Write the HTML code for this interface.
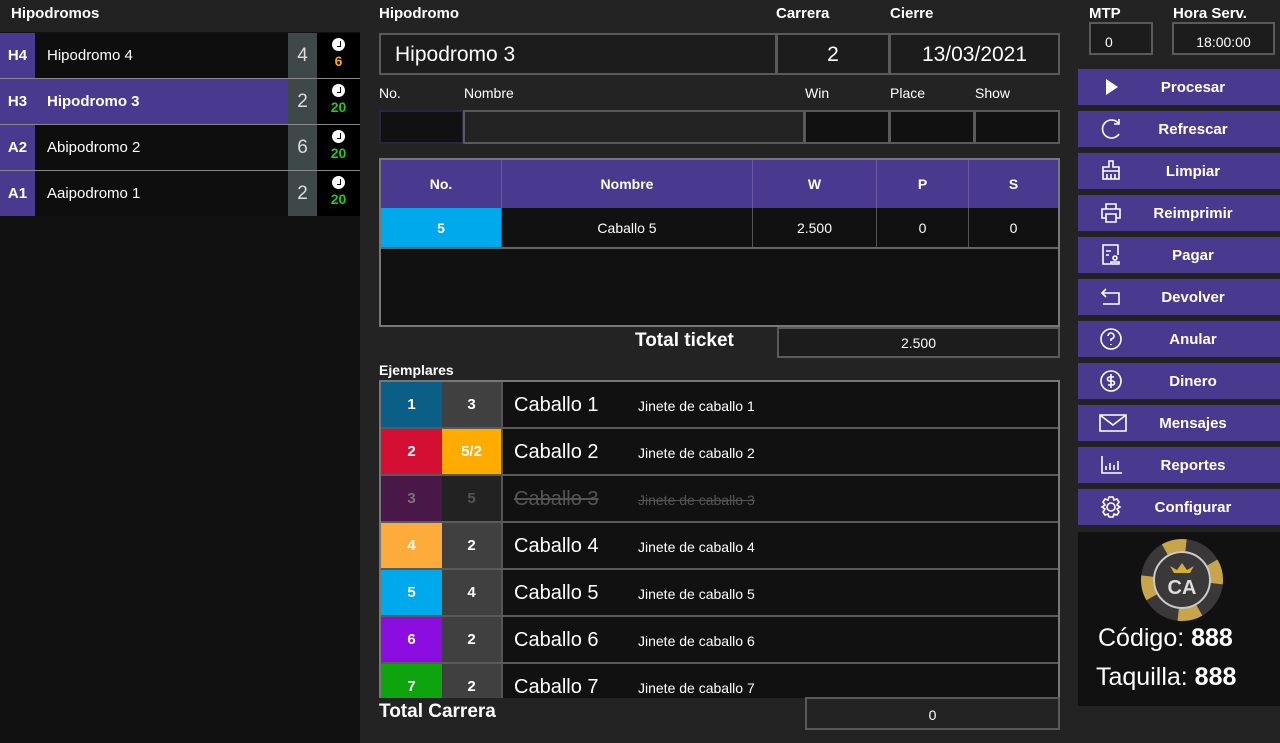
<!DOCTYPE html>
<html><head><meta charset="utf-8"><style>
*{box-sizing:border-box;margin:0;padding:0}
body{width:1280px;height:743px;background:#232323;font-family:"Liberation Sans",sans-serif;color:#fff;position:relative;overflow:hidden}
.a{position:absolute}
.lbl{font-weight:bold;font-size:15px}
.box{position:absolute;border:2px solid #5a5a5a;background:#1c1c1c}
.row{position:absolute;left:0;width:360px;height:45px}
.bd{position:absolute;left:0;top:0;width:35px;height:45px;background:#4a3a8f;font-weight:bold;font-size:15px;display:flex;align-items:center;justify-content:center}
.nm{position:absolute;left:35px;top:0;width:253px;height:45px;background:#0e0e0e;font-size:15px;display:flex;align-items:center;padding-left:12px}
.nb{position:absolute;left:288px;top:0;width:29px;height:45px;background:#3e4848;font-size:19px;display:flex;align-items:center;justify-content:center;color:#ddd}
.ck{position:absolute;left:317px;top:0;width:43px;height:45px;background:#000;text-align:center}
.ck i{display:block;width:13px;height:13px;border-radius:50%;background:#fff;margin:5px auto 0;position:relative}
.ck i:after{content:"";position:absolute;left:5px;top:3px;width:3px;height:5px;border-right:1.5px solid #000;border-bottom:1.5px solid #000}
.ck b{display:block;font-size:14px;margin-top:2px}
.btn{position:absolute;left:1078px;width:202px;height:36px;background:#4a3a8f;font-weight:bold;font-size:15px}
.btn span{position:absolute;left:0;right:0;top:10px;text-align:center;padding-left:28px}
.btn svg{position:absolute;left:20px;top:5px}
.th{position:absolute;top:0;height:48px;display:flex;align-items:center;justify-content:center;font-weight:bold;font-size:14px;border-right:1px solid #6a5aa8}
.td{position:absolute;top:48px;height:39px;display:flex;align-items:center;justify-content:center;font-size:14px;border-right:1px solid #555}
.er{position:absolute;left:0;width:678px;height:47px;border-bottom:2px solid #5a5a5a;background:#111}
.c1,.c2{position:absolute;top:0;height:45px;width:61px;display:flex;align-items:center;justify-content:center;font-weight:bold;font-size:15px}
.c1{left:0}.c2{left:61px;background:#404040;border-right:2px solid #555}
.en{position:absolute;left:133px;top:12px;font-size:20px}
.ej{position:absolute;left:257px;top:16px;font-size:14px}
</style></head><body>
<div class="a" style="left:0;top:0;width:360px;height:743px;background:#111"></div>
<div class="a" style="left:0;top:0;width:360px;height:32px;background:#222"></div>
<div class="a lbl" style="left:11px;top:5px">Hipodromos</div>

<div class="row" style="top:33px"><div class="bd">H4</div><div class="nm">Hipodromo 4</div><div class="nb">4</div><div class="ck"><i></i><b style="color:#f5a623">6</b></div></div>
<div class="row" style="top:79px"><div class="bd">H3</div><div class="nm" style="background:#4a3a8f;font-weight:bold">Hipodromo 3</div><div class="nb">2</div><div class="ck"><i></i><b style="color:#1ecb1e">20</b></div></div>
<div class="row" style="top:125px"><div class="bd">A2</div><div class="nm">Abipodromo 2</div><div class="nb">6</div><div class="ck"><i></i><b style="color:#1ecb1e">20</b></div></div>
<div class="row" style="top:171px"><div class="bd">A1</div><div class="nm">Aaipodromo 1</div><div class="nb">2</div><div class="ck"><i></i><b style="color:#1ecb1e">20</b></div></div>
<div class="a" style="left:0;top:78px;width:360px;height:1px;background:#888"></div>
<div class="a" style="left:0;top:124px;width:360px;height:1px;background:#888"></div>
<div class="a" style="left:0;top:170px;width:360px;height:1px;background:#888"></div>

<div class="a lbl" style="left:379px;top:5px">Hipodromo</div>
<div class="a lbl" style="left:776px;top:5px">Carrera</div>
<div class="a lbl" style="left:890px;top:5px">Cierre</div>
<div class="box" style="left:379px;top:33px;width:398px;height:42px;font-size:21px;padding:8px 0 0 14px">Hipodromo 3</div>
<div class="box" style="left:776px;top:33px;width:114px;height:42px;font-size:21px;text-align:center;padding-top:8px">2</div>
<div class="box" style="left:889px;top:33px;width:171px;height:42px;font-size:21px;text-align:center;padding-top:8px">13/03/2021</div>

<div class="a" style="left:379px;top:85px;font-size:14px">No.</div>
<div class="a" style="left:464px;top:85px;font-size:14px">Nombre</div>
<div class="a" style="left:805px;top:85px;font-size:14px">Win</div>
<div class="a" style="left:890px;top:85px;font-size:14px">Place</div>
<div class="a" style="left:975px;top:85px;font-size:14px">Show</div>
<div class="box" style="left:379px;top:110px;width:85px;height:34px;background:#111;border-color:#2a2540"></div>
<div class="box" style="left:463px;top:110px;width:342px;height:34px;background:#232323"></div>
<div class="box" style="left:804px;top:110px;width:86px;height:34px;background:#111"></div>
<div class="box" style="left:889px;top:110px;width:86px;height:34px;background:#111"></div>
<div class="box" style="left:974px;top:110px;width:86px;height:34px;background:#111"></div>

<div class="a" style="left:379px;top:158px;width:681px;height:169px;border:2px solid #777;background:#111">
 <div class="a" style="left:0;top:0;width:677px;height:48px;background:#4a3a8f"></div>
 <div class="th" style="left:0;width:121px">No.</div>
 <div class="th" style="left:121px;width:251px">Nombre</div>
 <div class="th" style="left:372px;width:124px">W</div>
 <div class="th" style="left:496px;width:92px">P</div>
 <div class="th" style="left:588px;width:89px;border:0">S</div>
 <div class="td" style="left:0;width:121px;background:#00a8ec;font-weight:bold">5</div>
 <div class="td" style="left:121px;width:251px">Caballo 5</div>
 <div class="td" style="left:372px;width:124px">2.500</div>
 <div class="td" style="left:496px;width:92px">0</div>
 <div class="td" style="left:588px;width:89px;border:0">0</div>
 <div class="a" style="left:0;top:87px;width:677px;height:2px;background:#666"></div>
</div>
<div class="a" style="left:635px;top:330px;font-size:19px;font-weight:bold">Total ticket</div>
<div class="box" style="left:777px;top:327px;width:283px;height:31px;font-size:14px;text-align:center;padding-top:6px">2.500</div>

<div class="a" style="left:379px;top:362px;font-size:14px;font-weight:bold">Ejemplares</div>
<div class="a" style="left:379px;top:380px;width:681px;height:318px;border:2px solid #777;border-bottom:0;background:#111;overflow:hidden">
 <div class="er" style="top:0"><div class="c1" style="background:#0b5e86">1</div><div class="c2">3</div><div class="en">Caballo 1</div><div class="ej">Jinete de caballo 1</div></div>
 <div class="er" style="top:47px"><div class="c1" style="background:#d50f34">2</div><div class="c2" style="background:#ffab00">5/2</div><div class="en">Caballo 2</div><div class="ej">Jinete de caballo 2</div></div>
 <div class="er" style="top:94px;color:#555"><div class="c1" style="background:#4a1848;color:#777">3</div><div class="c2" style="background:#222;color:#555">5</div><div class="en" style="text-decoration:line-through">Caballo 3</div><div class="ej" style="text-decoration:line-through">Jinete de caballo 3</div></div>
 <div class="er" style="top:141px"><div class="c1" style="background:#fdab3a">4</div><div class="c2">2</div><div class="en">Caballo 4</div><div class="ej">Jinete de caballo 4</div></div>
 <div class="er" style="top:188px"><div class="c1" style="background:#00a8ec">5</div><div class="c2">4</div><div class="en">Caballo 5</div><div class="ej">Jinete de caballo 5</div></div>
 <div class="er" style="top:235px"><div class="c1" style="background:#8c0de0">6</div><div class="c2">2</div><div class="en">Caballo 6</div><div class="ej">Jinete de caballo 6</div></div>
 <div class="er" style="top:282px;border:0"><div class="c1" style="background:#0ea40e">7</div><div class="c2">2</div><div class="en">Caballo 7</div><div class="ej">Jinete de caballo 7</div></div>
</div>
<div class="a" style="left:379px;top:701px;font-size:19px;font-weight:bold">Total Carrera</div>
<div class="box" style="left:805px;top:697px;width:255px;height:33px;font-size:14px;text-align:center;padding-top:8px;background:#232323">0</div>

<div class="a lbl" style="left:1089px;top:5px">MTP</div>
<div class="a lbl" style="left:1173px;top:5px">Hora Serv.</div>
<div class="box" style="left:1089px;top:22px;width:64px;height:33px;font-size:14px;padding:10px 0 0 14px">0</div>
<div class="box" style="left:1172px;top:22px;width:103px;height:33px;font-size:14px;text-align:center;padding-top:10px">18:00:00</div>

<div class="btn" style="top:69px"><svg width="26" height="26" viewBox="0 0 26 26"><path d="M8 5L20 13L8 21Z" fill="#fff"/></svg><span>Procesar</span></div>
<div class="btn" style="top:111px"><svg width="26" height="26" viewBox="0 0 26 26" fill="none" stroke="#fff" stroke-width="1.6"><path d="M21 8A9 9 0 1 0 21 18"/><path d="M21 3V8H16"/></svg><span>Refrescar</span></div>
<div class="btn" style="top:153px"><svg width="26" height="26" viewBox="0 0 26 26" fill="none" stroke="#fff" stroke-width="1.6"><path d="M11 3H15V9H21V13H5V9H11Z M5 13V21H21V13 M9 16V21 M13 16V21 M17 16V21"/></svg><span>Limpiar</span></div>
<div class="btn" style="top:195px"><svg width="26" height="26" viewBox="0 0 26 26" fill="none" stroke="#fff" stroke-width="1.6"><path d="M8 9V4H18V9 M8 18H4V9H22V18H18 M8 14H18V22H8Z"/></svg><span>Reimprimir</span></div>
<div class="btn" style="top:237px"><svg width="26" height="26" viewBox="0 0 26 26" fill="none" stroke="#fff" stroke-width="1.6"><path d="M12 22H5V3H20V13 M8 9H13 M8 13H11"/><circle cx="17" cy="16" r="2"/><path d="M13 22H21V20H13Z"/></svg><span>Pagar</span></div>
<div class="btn" style="top:279px"><svg width="26" height="26" viewBox="0 0 26 26" fill="none" stroke="#fff" stroke-width="1.6"><path d="M8 5L4 9L8 13 M4 9H21V20H5"/></svg><span>Devolver</span></div>
<div class="btn" style="top:321px"><svg width="26" height="26" viewBox="0 0 26 26" fill="none" stroke="#fff" stroke-width="1.6"><circle cx="13" cy="13" r="10"/><path d="M10 10A3 3 0 1 1 13 13V15 M13 18V19"/></svg><span>Anular</span></div>
<div class="btn" style="top:363px"><svg width="26" height="26" viewBox="0 0 26 26" fill="none" stroke="#fff" stroke-width="1.6"><circle cx="13" cy="13" r="10"/><path d="M16 9H11.5A2 2 0 0 0 11.5 13H14.5A2 2 0 0 1 14.5 17H10 M13 6V20"/></svg><span>Dinero</span></div>
<div class="btn" style="top:405px"><svg width="30" height="26" viewBox="0 0 30 26" fill="none" stroke="#fff" stroke-width="1.6"><path d="M2 5H28V21H2Z M2 5L15 15L28 5"/></svg><span>Mensajes</span></div>
<div class="btn" style="top:447px"><svg width="26" height="26" viewBox="0 0 26 26" fill="none" stroke="#fff" stroke-width="1.6"><path d="M4 4V21H24 M8 18V14 M12 18V11 M16 18V13 M20 18V9"/></svg><span>Reportes</span></div>
<div class="btn" style="top:489px"><svg width="26" height="26" viewBox="0 0 26 26" fill="none" stroke="#fff" stroke-width="1.6"><circle cx="13" cy="13" r="4"/><path d="M11 3H15L16 6L19 5L21 8L19 11L22 13L19 15L21 18L19 21L16 20L15 23H11L10 20L7 21L5 18L7 15L4 13L7 11L5 8L7 5L10 6Z"/></svg><span>Configurar</span></div>

<div class="a" style="left:1078px;top:532px;width:202px;height:174px;background:#111">
 <svg class="a" style="left:62px;top:6px" width="84" height="84" viewBox="0 0 84 84">
  <circle cx="42" cy="42" r="41" fill="#3a3838"/>
  <g stroke="#c9a54a" stroke-width="12" fill="none" transform="rotate(-30 42 42)"><circle cx="42" cy="42" r="35" stroke-dasharray="22 33"/></g>
  <circle cx="42" cy="42" r="28" fill="#3a3838" stroke="#ccc" stroke-width="2"/>
  <path d="M30 28L34 35H50L54 28L47 32L42 25L37 32Z" fill="#d4af37"/>
  <text x="42" y="56" text-anchor="middle" font-family="Liberation Sans" font-weight="bold" font-size="20" fill="#ddd">CA</text>
 </svg>
 <div class="a" style="left:20px;top:92px;font-size:25px">Código: <b>888</b></div>
 <div class="a" style="left:18px;top:131px;font-size:25px">Taquilla: <b>888</b></div>
</div>
</body></html>
